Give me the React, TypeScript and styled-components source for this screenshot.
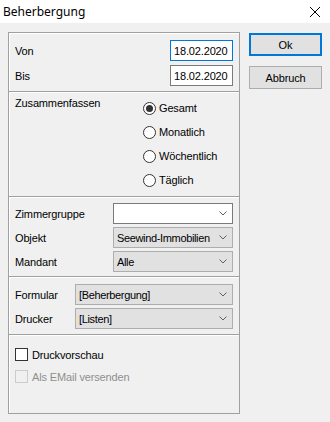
import styled, { createGlobalStyle } from "styled-components";

const GlobalStyle = createGlobalStyle`
    html, body {
        margin: 0;
        padding: 0;
        background: #f0f0f0;
    }
    body {
        font-family: "Liberation Sans", Arial, sans-serif;
        font-size: 11px;
        letter-spacing: -0.15px;
        color: #000;
    }
`;

const StyledWindow = styled.div`
    width: 330px;
    height: 422px;
    background: #f0f0f0;
    overflow: hidden;
`;

const StyledTitleBar = styled.div`
    height: 23px;
    background: #fff;
    display: flex;
    align-items: center;
    justify-content: space-between;
    padding: 0 10px 0 3px;
    box-sizing: border-box;
`;

const StyledTitle = styled.span`
    font-family: "Noto Sans", "Open Sans", sans-serif;
    font-size: 12px;
    letter-spacing: 0;
    color: #000;
    margin-top: -1px;
`;

const StyledBody = styled.div`
    display: flex;
    align-items: flex-start;
    padding: 9px 0 0 8px;
    gap: 9px;
`;

const StyledPanel = styled.div`
    width: 232px;
    height: 382px;
    box-sizing: border-box;
    border: 1px solid #a0a0a0;
    box-shadow: inset 1px 1px 0 #fff;
    display: flex;
    flex-direction: column;
`;

const StyledSection = styled.div<{ $pad: string }>`
    padding: ${(p) => p.$pad};
    display: flex;
    flex-direction: column;
`;

const StyledDivider = styled.div`
    height: 1px;
    background: #a0a0a0;
    border-bottom: 1px solid #fff;
`;

const StyledFieldRow = styled.div<{ $gap: number }>`
    display: grid;
    grid-template-columns: 1fr auto;
    align-items: center;
    height: 21px;
    margin-top: ${(p) => p.$gap}px;
    &:first-child {
        margin-top: 0;
    }
`;

const StyledLabel = styled.span<{ $disabled?: boolean }>`
    color: ${(p) => (p.$disabled ? "#8f8f8f" : "#000")};
    white-space: nowrap;
`;

const StyledDateInput = styled.div<{ $focused?: boolean }>`
    width: 63px;
    height: 21px;
    box-sizing: border-box;
    background: #fff;
    border: 1px solid ${(p) => (p.$focused ? "#0078d7" : "#7a7a7a")};
    display: flex;
    align-items: center;
    padding-left: 3px;
`;

const StyledSelect = styled.div<{ $width: number; $white?: boolean }>`
    width: ${(p) => p.$width}px;
    height: 21px;
    box-sizing: border-box;
    background: ${(p) => (p.$white ? "#fff" : "#e1e1e1")};
    border: 1px solid ${(p) => (p.$white ? "#7a7a7a" : "#adadad")};
    display: flex;
    align-items: center;
    justify-content: space-between;
    padding: 0 5px 0 3px;
    white-space: nowrap;
    letter-spacing: -0.35px;
`;

const StyledGroup = styled.div`
    display: grid;
    grid-template-columns: 128px 1fr;
`;

const StyledGroupLabel = styled.span`
    line-height: 14px;
`;

const StyledOptions = styled.div`
    display: flex;
    flex-direction: column;
`;

const StyledOption = styled.div`
    height: 24px;
    display: flex;
    align-items: center;
    gap: 3px;
`;

const StyledRadio = styled.span<{ $checked?: boolean }>`
    width: 13px;
    height: 13px;
    box-sizing: border-box;
    border: 1px solid #333;
    border-radius: 50%;
    background: #fff;
    display: flex;
    align-items: center;
    justify-content: center;
    &::after {
        content: "";
        width: 7px;
        height: 7px;
        border-radius: 50%;
        background: ${(p) => (p.$checked ? "#333" : "transparent")};
    }
`;

const StyledCheckRow = styled.div`
    height: 13px;
    display: flex;
    align-items: center;
    gap: 4px;
    margin-bottom: 9px;
`;

const StyledCheckbox = styled.span<{ $disabled?: boolean }>`
    width: 13px;
    height: 13px;
    box-sizing: border-box;
    border: 1px solid ${(p) => (p.$disabled ? "#cccccc" : "#333")};
    background: ${(p) => (p.$disabled ? "#f0f0f0" : "#fff")};
`;

const StyledButtons = styled.div`
    display: flex;
    flex-direction: column;
    gap: 10px;
    padding-top: 1px;
`;

const StyledButton = styled.div<{ $default?: boolean }>`
    width: 73px;
    height: 23px;
    box-sizing: border-box;
    background: #e1e1e1;
    border: ${(p) => (p.$default ? "2px solid #0078d7" : "1px solid #adadad")};
    display: flex;
    align-items: center;
    justify-content: center;
`;

function Chevron() {
    return (
        <svg width="8" height="5" viewBox="0 0 8 5">
            <path d="M0.5 0.5 L4 4 L7.5 0.5" fill="none" stroke="#606060" strokeWidth="1" />
        </svg>
    );
}

function CloseIcon() {
    return (
        <svg width="10" height="10" viewBox="0 0 10 10">
            <path d="M0 0 L10 10 M10 0 L0 10" stroke="#000" strokeWidth="1" />
        </svg>
    );
}

export default function App() {
    return (
        <StyledWindow>
            <GlobalStyle />
            <StyledTitleBar>
                <StyledTitle>Beherbergung</StyledTitle>
                <CloseIcon />
            </StyledTitleBar>
            <StyledBody>
                <StyledPanel>
                    <StyledSection $pad="7px 6px 5px 6px">
                        <StyledFieldRow $gap={4}>
                            <StyledLabel>Von</StyledLabel>
                            <StyledDateInput $focused>18.02.2020</StyledDateInput>
                        </StyledFieldRow>
                        <StyledFieldRow $gap={4}>
                            <StyledLabel>Bis</StyledLabel>
                            <StyledDateInput>18.02.2020</StyledDateInput>
                        </StyledFieldRow>
                    </StyledSection>
                    <StyledDivider />
                    <StyledSection $pad="3px 6px 4px 6px">
                        <StyledGroup>
                            <StyledGroupLabel>Zusammenfassen</StyledGroupLabel>
                            <StyledOptions>
                                <StyledOption>
                                    <StyledRadio $checked />
                                    Gesamt
                                </StyledOption>
                                <StyledOption>
                                    <StyledRadio />
                                    Monatlich
                                </StyledOption>
                                <StyledOption>
                                    <StyledRadio />
                                    Wöchentlich
                                </StyledOption>
                                <StyledOption>
                                    <StyledRadio />
                                    Täglich
                                </StyledOption>
                            </StyledOptions>
                        </StyledGroup>
                    </StyledSection>
                    <StyledDivider />
                    <StyledSection $pad="5px 6px 4px 6px">
                        <StyledFieldRow $gap={3}>
                            <StyledLabel>Zimmergruppe</StyledLabel>
                            <StyledSelect $width={120} $white>
                                <span />
                                <Chevron />
                            </StyledSelect>
                        </StyledFieldRow>
                        <StyledFieldRow $gap={3}>
                            <StyledLabel>Objekt</StyledLabel>
                            <StyledSelect $width={120}>
                                <span>Seewind-Immobilien</span>
                                <Chevron />
                            </StyledSelect>
                        </StyledFieldRow>
                        <StyledFieldRow $gap={3}>
                            <StyledLabel>Mandant</StyledLabel>
                            <StyledSelect $width={120}>
                                <span>Alle</span>
                                <Chevron />
                            </StyledSelect>
                        </StyledFieldRow>
                    </StyledSection>
                    <StyledDivider />
                    <StyledSection $pad="6px 6px 5px 6px">
                        <StyledFieldRow $gap={3}>
                            <StyledLabel>Formular</StyledLabel>
                            <StyledSelect $width={158}>
                                <span>[Beherbergung]</span>
                                <Chevron />
                            </StyledSelect>
                        </StyledFieldRow>
                        <StyledFieldRow $gap={3}>
                            <StyledLabel>Drucker</StyledLabel>
                            <StyledSelect $width={158}>
                                <span>[Listen]</span>
                                <Chevron />
                            </StyledSelect>
                        </StyledFieldRow>
                    </StyledSection>
                    <StyledDivider />
                    <StyledSection $pad="12px 6px 0 6px">
                        <StyledCheckRow>
                            <StyledCheckbox />
                            <StyledLabel>Druckvorschau</StyledLabel>
                        </StyledCheckRow>
                        <StyledCheckRow>
                            <StyledCheckbox $disabled />
                            <StyledLabel $disabled>Als EMail versenden</StyledLabel>
                        </StyledCheckRow>
                    </StyledSection>
                </StyledPanel>
                <StyledButtons>
                    <StyledButton $default>Ok</StyledButton>
                    <StyledButton>Abbruch</StyledButton>
                </StyledButtons>
            </StyledBody>
        </StyledWindow>
    );
}
